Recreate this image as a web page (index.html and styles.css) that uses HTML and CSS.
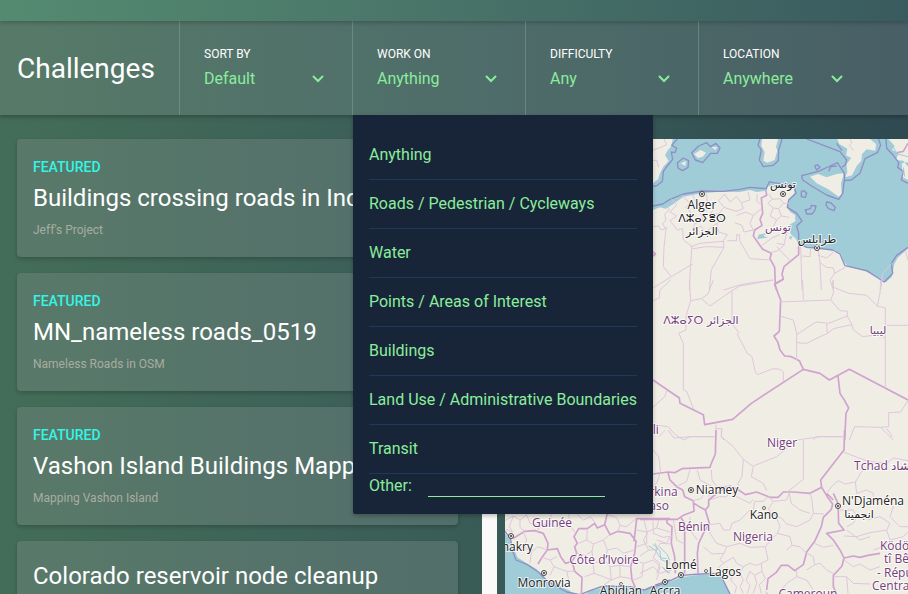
FILE: index.html
```html
<!DOCTYPE html>
<html lang="en">
<head>
<meta charset="utf-8">
<title>Challenges</title>
<link rel="stylesheet" href="styles.css">
</head>
<body>
<div class="topbar"></div>
<header class="filters">
  <h1 class="filters-title">Challenges</h1>
  <div class="filter">
    <span class="filter-label" id="l-sort">Sort by</span>
    <button class="filter-button" aria-labelledby="l-sort"><span>Default</span><svg class="chevron" viewBox="0 0 12 8"><path d="M1.500 1.500 6 6l4.500-4.500"/></svg></button>
  </div>
  <div class="filter">
    <span class="filter-label" id="l-work">Work on</span>
    <button class="filter-button" aria-labelledby="l-work" aria-expanded="true"><span>Anything</span><svg class="chevron" viewBox="0 0 12 8"><path d="M1.500 1.500 6 6l4.500-4.500"/></svg></button>
    <div class="menu">
      <ul class="menu-list">
        <li><a href="#">Anything</a></li>
        <li><a href="#">Roads / Pedestrian / Cycleways</a></li>
        <li><a href="#">Water</a></li>
        <li><a href="#">Points / Areas of Interest</a></li>
        <li><a href="#">Buildings</a></li>
        <li><a href="#">Land Use / Administrative Boundaries</a></li>
        <li><a href="#">Transit</a></li>
      </ul>
      <div class="menu-other">
        <label for="other">Other:</label>
        <input id="other" type="text">
      </div>
    </div>
  </div>
  <div class="filter">
    <span class="filter-label" id="l-diff">Difficulty</span>
    <button class="filter-button" aria-labelledby="l-diff"><span>Any</span><svg class="chevron" viewBox="0 0 12 8"><path d="M1.500 1.500 6 6l4.500-4.500"/></svg></button>
  </div>
  <div class="filter">
    <span class="filter-label" id="l-loc">Location</span>
    <button class="filter-button" aria-labelledby="l-loc"><span>Anywhere</span><svg class="chevron" viewBox="0 0 12 8"><path d="M1.500 1.500 6 6l4.500-4.500"/></svg></button>
  </div>
</header>
<main class="content">
  <div class="results">
    <article class="card">
      <div class="card-flag">Featured</div>
      <h2 class="card-title">Buildings crossing roads in India</h2>
      <a class="card-project" href="#">Jeff's Project</a>
    </article>
    <article class="card">
      <div class="card-flag">Featured</div>
      <h2 class="card-title">MN_nameless roads_0519</h2>
      <a class="card-project" href="#">Nameless Roads in OSM</a>
    </article>
    <article class="card">
      <div class="card-flag">Featured</div>
      <h2 class="card-title">Vashon Island Buildings Mapping</h2>
      <a class="card-project" href="#">Mapping Vashon Island</a>
    </article>
    <article class="card">
      <h2 class="card-title">Colorado reservoir node cleanup</h2>
    </article>
  </div>
  <div class="track"></div>
  <div class="map">
    <svg class="map-canvas" viewBox="505 139 403 455" preserveAspectRatio="xMinYMin slice" role="img" aria-label="Map">
      <!-- Mediterranean coast -->
      <g transform="translate(640 130) scale(.33333)">
        <path class="sea" d="M98 27 94 48 84 60 75 75 86 93 70 110 60 130 54 148 39 160V240L60 232 78 236 100 222 130 200 185 190 240 185 300 186 330 180 350 186 380 182 384 168 400 172 430 170 462 178 463 190 448 208 440 230 450 245 465 255 466 275 448 292 452 312 468 326 476 346 500 350 530 352 580 360 603 372 612 395 625 410 680 425 720 445 738 456 756 440 762 405 772 385 804 355V27Z"/>
        <path class="coast" d="M112 27 95 46 110 54 105 68 94 66 98 88 84 105 70 124 67 154 52 166 39 170M39 228 68 222 90 208 130 192 185 183 250 184 300 178 330 172 378 176 388 155 400 158 462 166 468 190 446 210 442 232 470 250 486 273 470 288 476 310 476 340M476 340 500 352 530 354 578 360 600 372 615 407 680 422 733 456 758 430 754 400 770 376 804 352"/>
        <path class="land" d="M366 27 364 48 374 66 370 92 382 98 404 90 412 62 408 50 414 27ZM510 140 534 132 560 142 590 132 612 130 603 160 605 192 596 200 565 178 530 160ZM592 27 598 42 622 56 618 76 634 84 620 102 622 126 616 142 636 136 650 108 664 92 666 72 680 58 706 62 708 42 690 27ZM745 27 764 48 756 60 776 68 768 90 790 92 804 110V27ZM162 72 182 60 198 68 188 80 174 84ZM122 100 138 94 136 108ZM214 50 232 52 226 60ZM786 100 804 96V150L786 140Z"/>
        <path class="coast" d="M360 27 354 45 364 60 358 90 370 110 400 106 415 92 416 60 426 27M485 137 535 124 570 108 592 98 612 128 614 142 608 190 596 208 560 195 515 168 488 150ZM500 27 600 65 620 90 616 104 606 112M590 40 606 62M716 27 722 46 712 68 675 86 660 130 634 150 612 152M738 27 740 55 760 76 776 98 773 112 790 124 784 150 804 160M155 68 176 48 200 38 212 50 228 40 240 54 232 70 212 70 188 98 166 90ZM112 98 130 84 146 92 144 112 128 122 114 114ZM524 108 532 104 540 112 530 120ZM484 184 492 182 500 190 496 202 484 200ZM496 240 512 236 514 226 528 228 524 242 516 252 500 252ZM560 216 572 218 586 232 582 242 566 236 558 226ZM566 124 572 110 590 108"/>
        <path class="coast-halo" d="M760 52 772 72 804 80M790 112 794 140"/>
        <path class="lake" d="M356 314 382 308 370 318 384 322 352 328ZM448 284 466 274 458 294ZM446 320 458 318 452 330Z"/>
        <path class="border" d="M378 182 380 196 364 204 368 250 360 268 366 286 344 300 340 318 368 358 394 370 390 386 404 412 406 462M476 346 476 374 432 410 426 432 430 448 404 462 410 480M39 365 46 372 39 378M804 40 790 64 772 68"/>
        <path class="region" d="M72 27 80 44 58 54 39 60M39 92 50 90 56 112M82 226 88 240 74 252 78 270 68 282 78 298 72 352 70 410 94 440 62 460 39 474M94 206 110 225 90 246 110 258 90 272 112 300 128 296 130 330 156 350 152 400 148 480M94 440 158 402M158 356 200 350 252 352 250 332 262 314 236 306 230 280 246 272 236 252 252 232 236 212 254 192M152 350 180 340 250 334M252 352 214 420 208 480M262 332 290 332 290 314 298 314 300 334 330 386 390 390M250 480 310 462 400 450M130 200 150 220 138 232 155 250 138 268 166 280 158 296 182 288 196 306 230 280M158 196 170 220 196 220 200 240 182 250 190 270 166 280M200 190 202 222 222 236 210 252 236 252M254 192 270 216 290 200 304 218 330 210 324 186M304 218 310 236 288 244 252 232M290 256 318 246 340 256 330 280 340 300 312 306 306 286 284 278M340 256 364 236M352 192 350 214 366 226M388 192 396 208 384 220 400 234 390 258 410 270 400 290M396 208 420 206 430 220 416 236 400 234M430 220 448 220M416 236 424 258 410 270M424 258 448 262M410 340 432 344 440 310 450 300M366 346 396 324 420 314M392 368 414 362 434 344M410 350 454 396M482 346 486 480M534 352 540 400 544 480M486 378 510 380 512 354M534 376 560 384 586 362M540 398 560 412 580 414 584 430 616 412M584 430 570 450 580 480M756 400 728 430 722 480M796 360 804 390M630 27 636 38 628 46 640 62M39 290 56 288 64 300 82 294"/>
      </g>
      <!-- Sahara -->
      <g transform="translate(640 280) scale(.33333)">
        <path class="border" d="M426 0 404 13 414 40 422 60 418 154 402 168 414 188 420 210 434 228 454 230 478 242 490 268 540 280 568 300 628 268 804 360M490 268 334 370 278 418 194 434 190 404 120 370 118 354 39 300M594 288 600 340 614 362 626 384 618 400 614 480"/>
        <path class="region" d="M92 0 60 30 58 54 39 62M148 0 152 62 138 108 138 150 116 160 130 190 130 330 140 334 158 380 164 390M152 62 184 56 210 78 276 32 300 18 400 0M220 0 204 42 184 56M276 32 276 130 296 158 292 164 322 220 336 230 346 276 352 284 400 266 420 268 430 276 430 304M488 0 490 60M420 66 572 60 580 40 580 0 576 20 626 40 680 46 712 78 736 84 736 324M712 78 720 40 722 0M572 60 600 92 622 94 622 108 566 130 528 126 470 164M420 108 460 120 470 160 470 240M470 188 500 190 540 170 560 162 580 146 636 134 622 108M560 132 562 160M636 134 640 150 668 170 700 166 736 172M740 136 804 136M39 382 74 350 80 332M39 434 84 440 104 462 130 480 150 470 226 470M228 434 228 480M230 446 246 446 244 470 252 480M520 480 530 470 610 470M804 362 782 396 746 398 746 440 722 442 644 440 628 480M722 442 740 460 760 480M740 446 752 462 756 470"/>
      </g>
      <!-- Gulf of Guinea -->
      <g transform="translate(640 430) scale(.33333)">
        <path class="sea" d="M0 490 30 476 74 462 124 442 180 434 235 432 252 460 272 492H0Z"/>
        <path class="coast" d="M0 488 30 474 74 460 124 436 180 432 235 430 248 448 270 492"/>
        <path class="lake-line" d="M38 342 60 362 62 388 90 400M58 350 82 374 88 390M66 410 84 430M376 485 384 492"/>
        <path class="border" d="M228 0 226 72 214 100 210 112 126 116 104 128 84 126 39 132M84 128 90 150 110 170 128 180 134 200 160 212 162 244 130 256 112 268 0 268M80 268 82 280 96 290 94 340 104 380 106 430M122 262 134 280 134 430M162 220 178 230 196 240 208 280 190 310 176 340 172 370 174 430M196 240 206 228 206 210 228 192 250 178 270 168 296 180 316 194 350 186 390 202 414 202 430 186 460 186 510 190 545 172 542 150 612 60 614 0M545 172 562 200 578 222 574 238 550 262 544 290 524 334 500 366 490 404 464 422 444 406 424 406 408 428 384 446 380 480M580 190 594 220 596 280 612 300 560 310 580 330 600 360 612 384 640 378 660 382 684 376 720 370M560 190 580 210M612 384 606 408 580 436 580 470 590 492"/>
        <path class="region" d="M39 60 56 80 62 126M56 20 76 0M84 0 102 24 152 20 224 20M244 0 244 20 280 50 310 88 306 140 294 160 296 180M310 88 340 110 334 140 370 160 380 182M340 108 410 80 470 30 540 20 610 20M490 30 490 148 442 186M610 66 684 94 740 100 760 84 804 92M562 186 584 160 596 152 614 162 646 156 656 140 660 130 680 112 690 94M646 156 650 190 680 180 700 190 700 200M600 240 640 240 650 260 640 280 620 290M650 260 690 268 720 260 750 280 740 300 690 308 650 320 612 318M740 300 750 330 730 350 700 360M620 300 660 330 690 320M740 200 760 230 750 260 780 290 804 290M750 330 790 320 804 306M210 210 238 200 260 200 270 182M270 180 290 200 330 220 340 208M340 240 344 214 370 214 384 200M384 200 400 214 440 210 448 190M400 214 386 236 394 252 424 264 440 282 470 290 510 270 520 250 552 252M448 190 454 220 480 240 510 250M510 188 516 210 520 250M330 240 300 270 276 280 270 300 250 300 240 280 208 284M410 264 420 290 412 310 450 320 456 346 440 360M412 310 392 330 376 350 384 390 364 400M456 346 480 350 500 370M208 286 210 310 230 340 260 350 252 370 216 372 190 350M260 350 300 340 330 352 376 350M252 370 240 388 250 400 232 416M250 400 280 382 290 400 310 410 300 430 280 432 262 412M310 410 330 400 350 406 364 400 366 424 344 436 330 424M300 430 310 450 300 470 310 490M330 424 318 450 330 466 322 490M344 436 350 460 340 490M280 432 272 450 290 470 284 490M366 424 376 446 358 464 364 490M470 420 470 440 440 460 424 480M470 440 500 450 520 480M524 404 540 400 560 420 580 430M500 370 520 380 524 404 500 420M524 340 550 352 580 346M612 390 640 410 660 402 690 420 720 410M580 440 620 440 640 460 690 462M620 440 624 490M12 270 22 310 10 330 26 360 0 378M39 272 40 310 70 322 96 318M26 360 50 360 60 340 94 342M100 270 110 330 130 340M150 262 150 300 172 330M60 130 50 160 39 170M110 170 140 154 150 120M160 212 184 206 196 180 230 170M172 120 180 150 214 168 206 200M214 120 216 150 230 170 270 168M0 430 40 410 60 430 96 420M50 360 40 384 60 400 50 430"/>
      </g>
      <!-- West Africa -->
      <g transform="translate(470 500) scale(.33333)">
        <path class="sea" d="M100 92 120 120 134 150 142 172 170 190 200 208 232 240 300 272 320 290H100ZM336 290 360 272 410 262 452 262 484 262 520 272 560 262 600 244V290Z"/>
        <path class="coast" d="M104 92 122 118 128 154 138 180 172 194 205 216 232 244 290 276 330 284 360 272 400 258 480 260 522 270 560 254 600 240"/>
        <path class="lake-line" d="M536 138 556 150 570 172 600 180M556 130 562 150M580 204 600 220"/>
        <path class="border" d="M128 116 164 94 194 92 220 100 234 130 232 150 216 172 204 192M232 150 262 146 272 170 286 190 306 184 314 214 336 232 334 284M306 184 320 160 314 140 322 130 312 110 326 86 352 86 374 70 382 84 404 74 412 40M404 74 420 104 444 94 480 100 498 124 494 160 482 200 486 240 496 262M492 124 500 56 600 56"/>
        <path class="region" d="M104 62 130 48 150 60 170 44 180 70 210 78 200 96M130 48 118 80 128 96 108 88M150 60 150 82 164 94M210 78 240 70 262 84 300 76 314 96M240 70 244 44M300 76 296 42M320 42 340 60 362 50 376 70M414 44 440 52 450 76 470 80 498 56M450 76 444 94M326 130 350 120 370 132 400 120 420 104M350 120 352 90M370 132 366 154 344 166 320 160M400 120 412 150 440 144 460 160 494 150M412 150 404 180 370 190 366 154M404 180 420 200 450 196 482 200M370 190 372 220 344 230M420 200 424 240 400 256M372 220 400 230 424 240 450 230 484 236M450 196 450 230M500 90 530 96 560 84 600 96M530 96 530 130 500 140M560 84 566 60M560 120 590 130 600 110M494 180 520 190 550 180 570 200 560 240M520 190 516 230 490 240M134 150 160 140 170 120 160 96M160 140 184 156 204 140 232 150M184 156 180 190M216 172 240 180 252 200 240 226M252 200 290 214 296 240 280 262M290 214 314 214M240 180 262 170"/>
      </g>
      <g class="marker">
        <circle cx="702" cy="194" r="2.500"/><circle cx="783" cy="194" r="2.500"/><circle cx="817" cy="248" r="2.500"/>
        <circle cx="691" cy="490" r="2.500"/><circle cx="838" cy="506" r="2.500"/><circle cx="681" cy="575" r="2.500"/>
        <circle cx="665" cy="582" r="2.500"/><circle cx="511" cy="536" r="2.500"/><circle cx="544" cy="573" r="2.500"/>
      </g>
      <g class="marker-dot"><circle cx="702" cy="194" r="1"/><circle cx="783" cy="194" r="1"/><circle cx="817" cy="248" r="1"/><circle cx="691" cy="490" r="1"/><circle cx="838" cy="506" r="1"/><circle cx="681" cy="575" r="1"/><circle cx="665" cy="582" r="1"/><circle cx="511" cy="536" r="1"/><circle cx="544" cy="573" r="1"/></g>
      <g class="marker-small"><circle cx="764" cy="508" r="1.500"/><circle cx="706" cy="571" r="1.500"/><circle cx="621" cy="584" r="1.500"/></g>
      <g class="city">
        <text x="702" y="209">Alger</text>
        <text class="script" x="702" y="222">ⴷⵣⴰⵢⴻⵔ</text>
        <text class="script" x="702" y="235">الجزائر</text>
        <text class="script" x="783" y="188">تونس</text>
        <text class="script" x="817" y="243">طرابلس</text>
        <text x="717" y="494">Niamey</text>
        <text x="764" y="519">Kano</text>
        <text x="873" y="505">N'Djaména</text>
        <text class="script" x="859" y="518">انجمينا</text>
        <text x="681" y="569">Lomé</text>
        <text x="725" y="576">Lagos</text>
        <text x="665" y="595">Accra</text>
        <text x="621" y="595">Abidjan</text>
        <text x="544" y="587">Monrovia</text>
        <text x="510" y="551">Conakry</text>
      </g>
      <g class="country">
        <text class="script" x="778" y="231">تونس</text>
        <text class="script" x="701" y="324">ⴷⵣⴰⵢⵔ الجزائر</text>
        <text class="script" x="878" y="334">ليبيا</text>
        <text x="782" y="447">Niger</text>
        <text x="884" y="470">Tchad تشاد</text>
        <text x="647" y="434">Mali</text>
        <text x="656" y="496">Burkina</text>
        <text x="656" y="510">Faso</text>
        <text x="694" y="531">Bénin</text>
        <text x="753" y="541">Nigeria</text>
        <text x="552" y="527">Guinée</text>
        <text x="604" y="564">Côte d’Ivoire</text>
        <text x="808" y="598">Cameroun</text>
        <text class="start" x="880" y="550">Ködörösêse</text>
        <text class="start" x="884" y="563">tî Bêafrîka</text>
        <text class="start" x="877" y="577">- République</text>
        <text class="start" x="872" y="590">Centrafricaine</text>
      </g>
    </svg>
  </div>
</main>
</body>
</html>
```
FILE: styles.css
```css
* {
  box-sizing: border-box;
}

body {
  display: flex;
  flex-direction: column;
  height: 100vh;
  margin: 0;
  overflow: hidden;
  background: linear-gradient(to right, #446d58, #3c6058 40%, #2f4a51);
  color: #fff;
  font-family: Roboto, sans-serif;
  font-size: 16px;
}

.topbar {
  position: relative;
  z-index: 2;
  flex: none;
  height: 21px;
  background: linear-gradient(to right, #548b70, #4b786a 40%, #395b5f);
  box-shadow: 0 2px 4px rgba(0, 0, 0, .2);
}

.filters {
  position: relative;
  z-index: 1;
  flex: none;
  display: flex;
  height: 94px;
  background: linear-gradient(to right, #577a68, #50706a 40%, #485f65);
  box-shadow: 0 2px 4px rgba(0, 0, 0, .25);
}

.filters-title {
  width: 179px;
  margin: 0;
  padding-left: 17px;
  font-size: 28px;
  font-weight: 400;
  line-height: 96px;
}

.filter {
  position: relative;
  width: 173px;
  padding: 24px 24px 0;
  border-left: 1px solid rgba(140, 180, 165, .4);
}

.filter-label {
  display: block;
  font-size: 12px;
  line-height: 18px;
  text-transform: uppercase;
}

.filter-button {
  display: flex;
  align-items: center;
  justify-content: space-between;
  width: 100%;
  height: 31px;
  padding: 0 4px 0 0;
  border: 0;
  background: none;
  color: #8aed9c;
  font: inherit;
}

.chevron {
  width: 12px;
  height: 8px;
  fill: none;
  stroke: #8aed9c;
  stroke-width: 2;
  stroke-linecap: round;
}

.menu {
  position: absolute;
  top: 94px;
  left: 0;
  width: 300px;
  padding: 16px 16px 17px;
  border-radius: 0 0 2px 2px;
  background: #182538;
  box-shadow: 0 2px 4px rgba(0, 0, 0, .25);
  color: #8aed9c;
}

.menu-list {
  margin: 0;
  padding: 0;
  list-style: none;
}

.menu-list li {
  border-bottom: 1px solid #21385a;
}

.menu-list a {
  display: block;
  color: inherit;
  line-height: 48px;
  text-decoration: none;
  white-space: nowrap;
}

.menu-other {
  display: flex;
  gap: 16px;
  line-height: 23px;
}

.menu-other input {
  width: 177px;
  height: 23px;
  padding: 0;
  border: 0 solid #8aed9c;
  border-bottom-width: 1px;
  border-radius: 0;
  outline: 0;
  background: none;
  color: #8aed9c;
  font: inherit;
}

.content {
  flex: 1;
  display: flex;
  min-height: 0;
  padding-top: 24px;
}

.results {
  flex: none;
  display: flex;
  flex-direction: column;
  gap: 16px;
  width: 482px;
  padding: 0 24px 0 17px;
}

.card {
  flex: none;
  padding: 16px 16px 14px;
  border-radius: 4px;
  background: rgba(138, 152, 150, .3);
  box-shadow: 0 2px 4px rgba(0, 0, 0, .2);
}

.card-flag {
  color: #33f5e5;
  font-size: 14px;
  font-weight: 500;
  line-height: 24px;
  text-transform: uppercase;
}

.card-title {
  margin: 0;
  overflow: hidden;
  font-size: 24px;
  font-weight: 400;
  line-height: 38px;
  white-space: nowrap;
}

.card-project {
  display: block;
  color: #a9ada0;
  font-size: 12px;
  line-height: 26px;
  text-decoration: none;
}

.track {
  flex: none;
  width: 15px;
  margin-right: 8px;
  background: #fafafa;
}

.map {
  flex: 1;
  min-width: 0;
  background: #f0ede5;
}

.map-canvas {
  display: block;
  width: 100%;
  height: 100%;
}

.land {
  fill: #f0ede5;
}

.sea,
.lake {
  fill: #a0ccd8;
}

.coast,
.coast-halo,
.lake-line,
.border,
.region {
  fill: none;
  stroke-linejoin: round;
}

.coast {
  stroke: #8f8fc6;
  stroke-width: 4;
}

.coast-halo,
.lake-line {
  stroke: #a0ccd8;
  stroke-width: 3;
}

.border {
  stroke: #d0a3cf;
  stroke-width: 5;
}

.region {
  stroke: #dfc6dc;
  stroke-width: 3;
}

.marker {
  fill: #f7f5ef;
  stroke: #444;
  stroke-width: 1;
}

.marker-dot {
  fill: #333;
}

.marker-small {
  fill: #fff;
  stroke: #666;
  stroke-width: 1;
}

.city,
.country {
  font-family: "Open Sans", "Noto Sans", "DejaVu Sans", sans-serif;
  font-size: 12px;
  text-anchor: middle;
  paint-order: stroke;
  stroke: rgba(255, 255, 255, .75);
  stroke-width: 2;
  fill: #222;
}

.country {
  fill: #74407a;
}

.script {
  font-family: "DejaVu Sans", sans-serif;
  font-size: 11px;
}

.start {
  text-anchor: start;
}
```
